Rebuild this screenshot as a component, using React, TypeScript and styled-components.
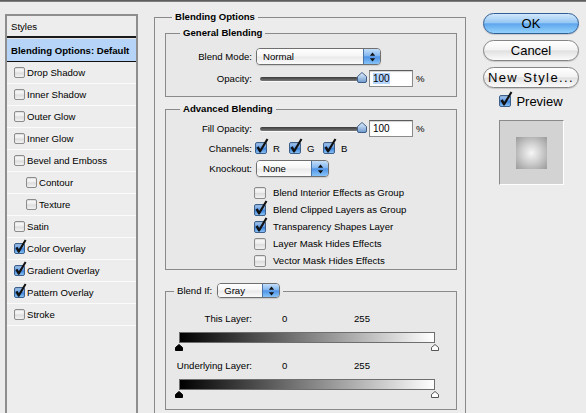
import React from "react";
import styled, { createGlobalStyle } from "styled-components";

const Global = createGlobalStyle`
  html, body { margin: 0; padding: 0; background: #ececec; }
  body { font-family: "Liberation Sans", Arial, sans-serif; color: #000; overflow: hidden; }
  #root { width: 586px; height: 413px; overflow: hidden; }
  * { box-sizing: border-box; }
`;

const Window = styled.div`
  width: 586px;
  height: 413px;
  overflow: hidden;
  background: #ececec;
  display: flex;
  flex-direction: column;
`;

const TopEdge = styled.div`
  height: 2px;
  flex: none;
  background: linear-gradient(#4d4d4d, #8f8f8f);
`;

const Main = styled.div`
  display: flex;
  align-items: flex-start;
`;

/* ---------- left style list ---------- */
const StyleList = styled.div`
  margin: 12px 0 0 5px;
  width: 133px;
  height: 420px;
  flex: none;
  border: 2px solid #8e8e8e;
  background: #ededed;
  display: flex;
  flex-direction: column;
  font-size: 9.6px;
`;

const ListHeader = styled.div`
  height: 22px;
  border-bottom: 2px solid #1a1a1a;
  display: flex;
  align-items: center;
  padding-left: 4px;
`;

const SelectedRow = styled.div`
  height: 24px;
  border-top: 1px solid #e2e2e2;
  border-bottom: 1px solid #111;
  background: #b6d4f7;
  display: flex;
  align-items: center;
  padding-left: 4px;
  font-weight: bold;
  white-space: nowrap;
`;

const ListItem = styled.div<{ $indent?: boolean }>`
  height: 22px;
  border-bottom: 1px solid #fbfbfb;
  display: flex;
  align-items: center;
  gap: 2px;
  padding-left: ${(p) => (p.$indent ? 19 : 7)}px;
  white-space: nowrap;
`;

/* ---------- checkbox ---------- */
const Box = styled.span<{ $size: number; $on: boolean }>`
  position: relative;
  flex: none;
  display: inline-block;
  width: ${(p) => p.$size}px;
  height: ${(p) => p.$size}px;
  border-radius: 2px;
  border: 1px solid ${(p) => (p.$on ? "#3d5f8c" : "#8c8c8c")};
  background: ${(p) =>
    p.$on
      ? "linear-gradient(180deg, #a9cbf1 0%, #5f9ae4 48%, #3a80da 52%, #86c0f4 100%)"
      : "linear-gradient(180deg, #fdfdfd 0%, #ececec 48%, #dcdcdc 52%, #f2f2f2 100%)"};
  box-shadow: inset 0 1px 1px rgba(0, 0, 0, 0.12);
`;

const Tick = styled.svg`
  position: absolute;
  left: -1px;
  top: -5px;
  overflow: visible;
`;

function Check({ on, size = 12 }: { on: boolean; size?: number }) {
  return (
    <Box $size={size} $on={on}>
      {on && (
        <Tick width={size + 2} height={size + 4} viewBox="0 0 14 16">
          <path d="M1.5 9.5 L3.7 8.2 L5.2 11 L11.6 0.4 L13.4 1.5 L5.7 14.6 L4.4 14.6 Z" fill="#111" />
        </Tick>
      )}
    </Box>
  );
}

/* ---------- fieldsets ---------- */
const OuterGroup = styled.fieldset`
  margin: 9px 0 0 16px;
  width: 312px;
  flex: none;
  min-width: 0;
  padding: 4px 8px 10px 10px;
  border: 1px solid #8a8a8a;
`;

const InnerGroup = styled.fieldset<{ $mt: number; $pt: number; $pb: number }>`
  margin: ${(p) => p.$mt}px 0 0 0;
  min-width: 0;
  padding: ${(p) => p.$pt}px 0 ${(p) => p.$pb}px 0;
  border: 1px solid #8a8a8a;
  background: #e8e8e8;
`;

const Legend = styled.legend<{ $offset: number }>`
  margin-left: ${(p) => p.$offset}px;
  padding: 0 3px;
  font-weight: bold;
  font-size: 9.6px;
  line-height: 12px;
  white-space: nowrap;
`;

const ControlLegend = styled.legend`
  margin-left: 8px;
  padding: 0 3px 2px;
  display: flex;
  align-items: center;
  gap: 5px;
  font-size: 9.6px;
  white-space: nowrap;
`;

const FormRow = styled.div<{ $h: number; $mt?: number }>`
  display: flex;
  align-items: center;
  height: ${(p) => p.$h}px;
  margin-top: ${(p) => p.$mt ?? 0}px;
  font-size: 9.6px;
  white-space: nowrap;
`;

const Label = styled.span`
  width: 86px;
  flex: none;
  text-align: right;
`;

/* ---------- popup select ---------- */
const Popup = styled.div<{ $w: number; $h: number; $ml?: number }>`
  display: flex;
  flex: none;
  width: ${(p) => p.$w}px;
  height: ${(p) => p.$h}px;
  margin-left: ${(p) => p.$ml ?? 0}px;
  border: 1px solid #6f6f6f;
  border-radius: 4px;
  overflow: hidden;
  box-shadow: 0 1px 1px rgba(0, 0, 0, 0.12);
`;

const PopupText = styled.span`
  flex: 1;
  display: flex;
  align-items: center;
  padding-left: 6px;
  font-size: 9.6px;
  background: linear-gradient(180deg, #ffffff 0%, #f5f5f5 48%, #e9e9e9 52%, #fbfbfb 100%);
`;

const PopupArrows = styled.span`
  width: 17px;
  flex: none;
  display: flex;
  align-items: center;
  justify-content: center;
  border-left: 1px solid #4b74a6;
  background: linear-gradient(180deg, #c3def9 0%, #82b6ef 46%, #4f93e6 52%, #86c4f8 100%);
`;

function Select({ value, w, h = 17, ml }: { value: string; w: number; h?: number; ml?: number }) {
  return (
    <Popup $w={w} $h={h} $ml={ml}>
      <PopupText>{value}</PopupText>
      <PopupArrows>
        <svg width="7" height="10" viewBox="0 0 7 10">
          <path d="M3.5 0.5 L6.2 3.8 L0.8 3.8 Z" fill="#111" />
          <path d="M0.8 6.2 L6.2 6.2 L3.5 9.5 Z" fill="#111" />
        </svg>
      </PopupArrows>
    </Popup>
  );
}

/* ---------- slider + field ---------- */
const Slider = styled.div`
  display: flex;
  align-items: center;
  margin-left: 8px;
`;

const Track = styled.div`
  width: 98px;
  height: 4px;
  border-radius: 2px;
  background: linear-gradient(#3a3a3a, #7a7a7a);
  box-shadow: 0 1px 0 rgba(255, 255, 255, 0.8);
`;

const Thumb = styled.svg`
  flex: none;
  margin-left: -1px;
  margin-top: -2px;
`;

function OpacitySlider() {
  return (
    <Slider>
      <Track />
      <Thumb width="10" height="11" viewBox="0 0 10 11">
        <defs>
          <linearGradient id="thumbFill" x1="0" y1="0" x2="0" y2="1">
            <stop offset="0" stopColor="#e3eefa" />
            <stop offset="0.5" stopColor="#a9c6e8" />
            <stop offset="1" stopColor="#6f98cb" />
          </linearGradient>
        </defs>
        <path
          d="M5 0.5 L9.5 4.5 V9 Q9.5 10.5 8 10.5 H2 Q0.5 10.5 0.5 9 V4.5 Z"
          fill="url(#thumbFill)"
          stroke="#3f5f88"
          strokeWidth="1"
        />
      </Thumb>
    </Slider>
  );
}

const NumField = styled.div`
  width: 44px;
  height: 17px;
  flex: none;
  margin-left: 2px;
  border: 1px solid #8b8b8b;
  border-top-color: #5c5c5c;
  background: #fff;
  display: flex;
  align-items: center;
  padding-left: 3px;
  font-size: 10px;
  box-shadow: inset 0 1px 1px rgba(0, 0, 0, 0.18);
`;

const Highlight = styled.span`
  background: #b5d5ff;
`;

const Unit = styled.span`
  margin-left: 3px;
`;

/* ---------- channels & options ---------- */
const Channels = styled.div`
  display: flex;
  margin-left: 3px;
`;

const Channel = styled.span`
  display: flex;
  align-items: center;
  gap: 6px;
  width: 34px;
  flex: none;
`;

const OptionList = styled.div`
  margin-top: 7px;
  display: flex;
  flex-direction: column;
`;

const Option = styled.div`
  height: 17px;
  display: flex;
  align-items: center;
  gap: 7px;
  padding-left: 88px;
  font-size: 9.6px;
  white-space: nowrap;
`;

/* ---------- blend if ---------- */
const LevelRow = styled.div<{ $mt: number }>`
  display: flex;
  align-items: center;
  height: 12px;
  margin-top: ${(p) => p.$mt}px;
  font-size: 9.6px;
  white-space: nowrap;
`;

const LevelMin = styled.span`
  margin-left: 30px;
  width: 72px;
  flex: none;
`;

const Ramp = styled.div`
  margin: 8px 0 0 13px;
  width: 256px;
`;

const RampBar = styled.div`
  height: 11px;
  border: 1px solid #6e6e6e;
  background: linear-gradient(to right, #000 0%, #fff 100%);
`;

const Stops = styled.div`
  display: flex;
  justify-content: space-between;
  margin: 1px -4px 0;
  height: 7px;
`;

function Stop({ white }: { white?: boolean }) {
  return (
    <svg width="8" height="7" viewBox="0 0 8 7">
      <path
        d="M4 0.5 L7.5 3.5 V6.5 H0.5 V3.5 Z"
        fill={white ? "#fff" : "#000"}
        stroke={white ? "#555" : "#000"}
        strokeWidth="1"
      />
    </svg>
  );
}

function LevelRamp() {
  return (
    <Ramp>
      <RampBar />
      <Stops>
        <Stop />
        <Stop white />
      </Stops>
    </Ramp>
  );
}

/* ---------- right column ---------- */
const Side = styled.div`
  margin: 11px 0 0 17px;
  width: 96px;
  flex: none;
  display: flex;
  flex-direction: column;
  align-items: center;
`;

const ButtonStack = styled.div`
  display: flex;
  flex-direction: column;
  gap: 6px;
`;

const Button = styled.button<{ $primary?: boolean; $spacing?: number }>`
  width: 96px;
  height: 21px;
  padding: 0;
  border-radius: 11px;
  font-family: "Liberation Sans", Arial, sans-serif;
  font-size: 13px;
  color: #000;
  letter-spacing: ${(p) => p.$spacing ?? 0}px;
  border: 1px solid ${(p) => (p.$primary ? "#2f5e96" : "#858585")};
  background: ${(p) =>
    p.$primary
      ? "linear-gradient(180deg, #d3e8fc 0%, #98c8f4 45%, #5fa6ed 52%, #94d2fc 100%)"
      : "linear-gradient(180deg, #ffffff 0%, #f3f3f3 45%, #e1e1e1 52%, #fbfbfb 100%)"};
  box-shadow: 0 1px 1px rgba(0, 0, 0, 0.15);
`;

const PreviewRow = styled.div`
  margin-top: 6px;
  height: 14px;
  display: flex;
  align-items: center;
  gap: 5px;
  font-size: 13px;
`;

const Swatch = styled.div`
  margin-top: 12px;
  width: 65px;
  height: 65px;
  border: 1px solid;
  border-color: #8a8a8a #ffffff #ffffff #8a8a8a;
  background: #d3d3d3;
  display: flex;
  align-items: center;
  justify-content: center;
`;

const SwatchInner = styled.div`
  width: 31px;
  height: 32px;
  background: radial-gradient(circle at 50% 50%, #f6f6f6 0%, #cfcfcf 45%, #9a9a9a 100%);
`;

const styleItems: { name: string; on: boolean; indent?: boolean }[] = [
  { name: "Drop Shadow", on: false },
  { name: "Inner Shadow", on: false },
  { name: "Outer Glow", on: false },
  { name: "Inner Glow", on: false },
  { name: "Bevel and Emboss", on: false },
  { name: "Contour", on: false, indent: true },
  { name: "Texture", on: false, indent: true },
  { name: "Satin", on: false },
  { name: "Color Overlay", on: true },
  { name: "Gradient Overlay", on: true },
  { name: "Pattern Overlay", on: true },
  { name: "Stroke", on: false },
];

const options: { name: string; on: boolean }[] = [
  { name: "Blend Interior Effects as Group", on: false },
  { name: "Blend Clipped Layers as Group", on: true },
  { name: "Transparency Shapes Layer", on: true },
  { name: "Layer Mask Hides Effects", on: false },
  { name: "Vector Mask Hides Effects", on: false },
];

export default function App() {
  return (
    <Window>
      <Global />
      <TopEdge />
      <Main>
        <StyleList>
          <ListHeader>Styles</ListHeader>
          <SelectedRow>Blending Options: Default</SelectedRow>
          {styleItems.map((it) => (
            <ListItem key={it.name} $indent={it.indent}>
              <Check on={it.on} size={11} />
              <span>{it.name}</span>
            </ListItem>
          ))}
        </StyleList>

        <OuterGroup>
          <Legend $offset={7}>Blending Options</Legend>

          <InnerGroup $mt={0} $pt={9} $pb={9}>
            <Legend $offset={14}>General Blending</Legend>
            <FormRow $h={17}>
              <Label>Blend Mode:</Label>
              <Select value="Normal" w={125} ml={4} />
            </FormRow>
            <FormRow $h={17} $mt={5}>
              <Label>Opacity:</Label>
              <OpacitySlider />
              <NumField>
                <Highlight>100</Highlight>
              </NumField>
              <Unit>%</Unit>
            </FormRow>
          </InnerGroup>

          <InnerGroup $mt={6} $pt={5} $pb={0}>
            <Legend $offset={14}>Advanced Blending</Legend>
            <FormRow $h={17}>
              <Label>Fill Opacity:</Label>
              <OpacitySlider />
              <NumField>100</NumField>
              <Unit>%</Unit>
            </FormRow>
            <FormRow $h={16} $mt={3}>
              <Label>Channels:</Label>
              <Channels>
                <Channel>
                  <Check on />R
                </Channel>
                <Channel>
                  <Check on />G
                </Channel>
                <Channel>
                  <Check on />B
                </Channel>
              </Channels>
            </FormRow>
            <FormRow $h={17} $mt={4}>
              <Label>Knockout:</Label>
              <Select value="None" w={73} ml={4} />
            </FormRow>
            <OptionList>
              {options.map((o) => (
                <Option key={o.name}>
                  <Check on={o.on} />
                  <span>{o.name}</span>
                </Option>
              ))}
            </OptionList>
          </InnerGroup>

          <InnerGroup $mt={13} $pt={12} $pb={11}>
            <ControlLegend>
              <span>Blend If:</span>
              <Select value="Gray" w={63} h={15} />
            </ControlLegend>
            <LevelRow $mt={0}>
              <Label>This Layer:</Label>
              <LevelMin>0</LevelMin>
              <span>255</span>
            </LevelRow>
            <LevelRamp />
            <LevelRow $mt={8}>
              <Label>Underlying Layer:</Label>
              <LevelMin>0</LevelMin>
              <span>255</span>
            </LevelRow>
            <LevelRamp />
          </InnerGroup>
        </OuterGroup>

        <Side>
          <ButtonStack>
            <Button $primary>OK</Button>
            <Button>Cancel</Button>
            <Button $spacing={1.4}>New Style...</Button>
          </ButtonStack>
          <PreviewRow>
            <Check on />
            <span>Preview</span>
          </PreviewRow>
          <Swatch>
            <SwatchInner />
          </Swatch>
        </Side>
      </Main>
    </Window>
  );
}
